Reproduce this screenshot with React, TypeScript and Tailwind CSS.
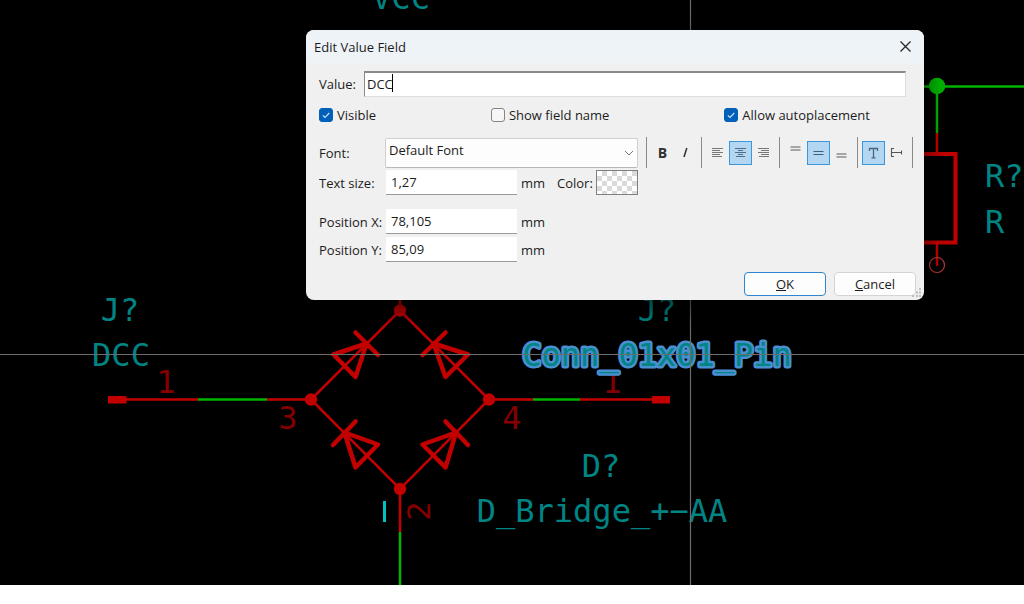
import type { ReactNode } from "react";

const WIRE = "#00b400";
const BODY = "#c20000";
const FIELD = "#008484";
const PIN = "#840000";

function Diode({ bar, tri }: { bar: string; tri: string }) {
  return (
    <g stroke={BODY} strokeWidth="4.500" strokeLinecap="round" strokeLinejoin="round" fill="none">
      <path d={bar} />
      <path d={tri} />
    </g>
  );
}

function Schematic() {
  return (
    <svg className="absolute inset-0 h-full w-full" aria-label="Schematic canvas">
      <g stroke={BODY} strokeWidth="2.5" fill="none">
        <path d="M400 290V310.500L311 399.500L400 489L489 399.500L400 310.500" />
        <path d="M400 489V532M126 399.500H198M267 399.500H311M489 399.500H533M580 399.500H653M937 133V153M937 244V266" />
        <path d="M900 154H955.500V242.500H900" strokeWidth="4" />
      </g>
      <g fill={BODY}>
        <circle cx="400" cy="310.500" r="6.200" />
        <circle cx="311" cy="399.500" r="6.200" />
        <circle cx="489" cy="399.500" r="6.200" />
        <circle cx="400" cy="489" r="6.200" />
        <rect x="108" y="396" width="18.500" height="7.500" />
        <rect x="652" y="396" width="18" height="7.500" />
      </g>
      <Diode bar="M355.500 332.500L378 355" tri="M366.500 343.500L333.500 354.500L355.500 377Z" />
      <Diode bar="M445.500 332.500L422.500 355" tri="M433.500 343.500L468 354.500L445.500 377Z" />
      <Diode bar="M355.500 421.500L333 445" tri="M344.500 432.500L378 444.500L355.500 467.500Z" />
      <Diode bar="M445.500 421.500L468 445" tri="M456 432.500L422.500 444.500L445.500 467.500Z" />
      <g stroke={WIRE} strokeWidth="2.500">
        <path d="M198 399.500H267M533 399.500H580M400 532V600M900 86.500H2400M937 86V133" />
      </g>
      <circle cx="937" cy="86" r="8.300" fill={WIRE} />
      <circle cx="937" cy="265" r="7.500" fill="none" stroke="#b83a3a" strokeWidth="1.200" />
      <path d="M384.500 501V522" stroke="#00c2c2" strokeWidth="3" />

      <g
        className="font-['DejaVu_Sans_Mono',monospace] text-[32px]"
        fill={FIELD}
        textAnchor="middle"
      >
        <text x="401" y="9">VCC</text>
        <text x="120" y="321">J?</text>
        <text x="121" y="366">DCC</text>
        <text x="657" y="321">J?</text>
        <text x="601" y="477">D?</text>
        <text x="602" y="522">D_Bridge_+−AA</text>
        <text x="985" y="187" textAnchor="start">R?</text>
        <text x="985" y="233" textAnchor="start">R</text>
        <g fill={PIN}>
          <text x="166" y="393">1</text>
          <text x="612" y="393">1</text>
          <text x="288" y="429">3</text>
          <text x="512" y="429">4</text>
          <text transform="translate(430 511) rotate(-90)">2</text>
        </g>
        <text
          x="657"
          y="366"
          stroke="#4a8fd0"
          strokeWidth="5"
          strokeLinejoin="round"
          paintOrder="stroke"
        >
          Conn_01x01_Pin
        </text>
      </g>
      <path d="M0 354.500H2400M690.500 0V1600" stroke="#6c6c6c" strokeWidth="1.200" />
    </svg>
  );
}

function Check({ id, label, checked }: { id: string; label: string; checked?: boolean }) {
  return (
    <div className="flex items-center gap-1">
      <span className="relative flex">
        <input
          id={id}
          type="checkbox"
          defaultChecked={checked}
          className="peer h-3.5 w-3.5 appearance-none rounded-[3px] border border-[#858585] bg-[#f6f6f6] checked:border-[#005fb8] checked:bg-[#005fb8]"
        />
        <svg
          viewBox="0 0 14 14"
          className="pointer-events-none absolute inset-0 hidden h-3.5 w-3.5 peer-checked:block"
        >
          <path d="M3.800 7.300L6 9.500L10.300 5" fill="none" stroke="#cfe3f5" strokeWidth="1.100" />
        </svg>
      </span>
      <label htmlFor={id}>{label}</label>
    </div>
  );
}

function Tool({ label, active, children }: { label: string; active?: boolean; children: ReactNode }) {
  return (
    <button
      type="button"
      aria-label={label}
      aria-pressed={!!active}
      className={
        active
          ? "flex h-6 w-[23px] items-center justify-center border border-[#3c96dc] bg-[#b3d6f3]"
          : "flex h-6 w-[23px] items-center justify-center"
      }
    >
      {children}
    </button>
  );
}

function Glyph({ d, width = 1, color = "#777777" }: { d: string; width?: number; color?: string }) {
  return (
    <svg width="15" height="16" viewBox="0 0 15 16" className="shrink-0">
      <path d={d} fill="none" stroke={color} strokeWidth={width} />
    </svg>
  );
}

function Separator() {
  return <span className="h-[31px] w-px bg-[#8a8a8a]" />;
}

function Toolbar() {
  return (
    <div className="flex items-center" role="toolbar" aria-label="Text style">
      <Separator />
      <div className="flex px-1">
        <Tool label="Bold">
          <span className="text-sm font-bold text-[#303030]">B</span>
        </Tool>
        <Tool label="Italic">
          <Glyph d="M8.800 3L6 12" width={1.500} color="#333333" />
        </Tool>
      </div>
      <Separator />
      <div className="flex px-1">
        <Tool label="Align left">
          <Glyph d="M2 3.500H13M2 5.500H10M2 7.500H13M2 9.500H10M2 11.500H12" />
        </Tool>
        <Tool label="Align center" active>
          <Glyph d="M2 3.500H13M5 5.500H10M2 7.500H13M5 9.500H10M3 11.500H12" color="#4f6b85" />
        </Tool>
        <Tool label="Align right">
          <Glyph d="M2 3.500H13M5 5.500H13M2 7.500H13M5 9.500H13M3 11.500H13" />
        </Tool>
      </div>
      <Separator />
      <div className="flex px-1">
        <Tool label="Align top">
          <Glyph d="M2.500 2H12.500M2.500 5H12.500" width={2} color="#a6a6a6" />
        </Tool>
        <Tool label="Align middle" active>
          <Glyph d="M2.500 6.500H12.500M2.500 9.500H12.500" color="#3f5f7a" />
        </Tool>
        <Tool label="Align bottom">
          <Glyph d="M2.500 9H12.500M2.500 12H12.500" width={2} color="#a6a6a6" />
        </Tool>
      </div>
      <Separator />
      <div className="flex px-1">
        <Tool label="Horizontal text" active>
          <Glyph d="M3.500 6V3.500H11.500V6M7.500 3.500V13M5.500 12.800H9.500" width={1.300} color="#4f6478" />
        </Tool>
        <Tool label="Vertical text">
          <Glyph d="M5 3.500H2.500V11.500H5M2.500 7.500H12.500M12.500 5.500V9.500" width={1.100} color="#555555" />
        </Tool>
      </div>
      <Separator />
    </div>
  );
}

function Measure({ id, label, value, children }: { id: string; label: string; value: string; children?: ReactNode }) {
  return (
    <div className="flex items-center">
      <label htmlFor={id} className="w-[67px]">{label}</label>
      <input
        id={id}
        type="text"
        defaultValue={value}
        className="h-[25px] w-[131px] border-b border-[#999999] bg-white px-[5px] outline-none"
      />
      <span className="ml-1 w-6">mm</span>
      {children}
    </div>
  );
}

function EditDialog() {
  return (
    <form
      role="dialog"
      aria-labelledby="dialog-title"
      className="absolute left-[306px] top-[30px] w-[618px] overflow-hidden rounded-lg bg-[#f0f0f0] pb-1 shadow-[0_8px_20px_4px_rgba(0,0,0,0.5)]"
    >
      <header className="flex h-[33px] items-center justify-between bg-[#eef3f8] pl-2 pr-3">
        <h1 id="dialog-title">Edit Value Field</h1>
        <button type="button" aria-label="Close">
          <svg width="13" height="13" viewBox="0 0 13 13" className="block">
            <path d="M1.500 1.500L11.500 11.500M11.500 1.500L1.500 11.500" stroke="#222222" strokeWidth="1.200" />
          </svg>
        </button>
      </header>

      <div className="flex flex-col pl-[13px] pr-2">
        <div className="mr-2.5 mt-2 flex items-center">
          <label htmlFor="value" className="w-[45px]">Value:</label>
          <div className="relative flex flex-1">
            <input
              id="value"
              type="text"
              defaultValue="DCC"
              className="h-[26px] w-full border-l border-t-2 border-b border-r border-b-[#dddddd] border-l-[#8a8a8a] border-r-[#dddddd] border-t-[#8a8a8a] bg-white pb-0.5 pl-0.5 outline-none"
            />
            <span className="absolute left-7 top-[3px] h-[18px] w-px bg-black" />
          </div>
        </div>

        <div className="mr-[46px] mt-2 flex h-5 justify-between">
          <Check id="visible" label="Visible" checked />
          <Check id="show-name" label="Show field name" />
          <Check id="autoplace" label="Allow autoplacement" checked />
        </div>

        <div className="mr-[3px] mt-3 flex items-center">
          <label htmlFor="font" className="w-[66px]">Font:</label>
          <div className="relative mr-2 flex flex-1">
            <select
              id="font"
              className="h-[30px] w-full appearance-none rounded-xs border border-[#cfcfcf] border-b-[#b8b8b8] bg-[#fdfdfd] pb-1.5 pl-[3px]"
            >
              <option>Default Font</option>
            </select>
            <svg width="10" height="6" viewBox="0 0 10 6" className="pointer-events-none absolute right-1 top-3">
              <path d="M1 1L5 5L9 1" fill="none" stroke="#777777" />
            </svg>
          </div>
          <Toolbar />
        </div>

        <div className="mt-0.5">
          <Measure id="text-size" label="Text size:" value="1,27">
            <span id="color-label" className="ml-3 w-[35px]">Color:</span>
            <button
              type="button"
              aria-labelledby="color-label"
              className="ml-1 h-[25px] w-[42px] border border-[#808080] bg-[repeating-conic-gradient(#dadada_0_25%,#ffffff_0_50%)] bg-[length:10px_10px]"
            />
          </Measure>
        </div>
        <div className="mt-3.5 flex flex-col gap-[3px]">
          <Measure id="pos-x" label="Position X:" value="78,105" />
          <Measure id="pos-y" label="Position Y:" value="85,09" />
        </div>

        <div className="mt-2.5 flex justify-end gap-2">
          <button type="submit" className="h-6 w-[82px] rounded border border-[#2f86d0] bg-[#fdfdfd]">
            <u>O</u>K
          </button>
          <button type="button" className="h-6 w-[82px] rounded border border-[#d4d4d4] bg-[#fdfdfd]">
            <u>C</u>ancel
          </button>
        </div>
      </div>
      <svg width="10" height="10" viewBox="0 0 10 10" className="absolute bottom-0.5 right-0.5">
        <path d="M7 0H9V2H7ZM4 3.500H6V5.500H4ZM7 3.500H9V5.500H7ZM0 7H2V9H0ZM4 7H6V9H4ZM7 7H9V9H7Z" fill="#bdbdbd" />
      </svg>
    </form>
  );
}

export default function App() {
  return (
    <div className="flex min-h-screen flex-col bg-white font-['Open_Sans',sans-serif] text-[13px] leading-5 text-[#1c1c1c]">
      <main className="relative mb-[19px] flex-1 overflow-hidden bg-black">
        <Schematic />
        <EditDialog />
      </main>
    </div>
  );
}
